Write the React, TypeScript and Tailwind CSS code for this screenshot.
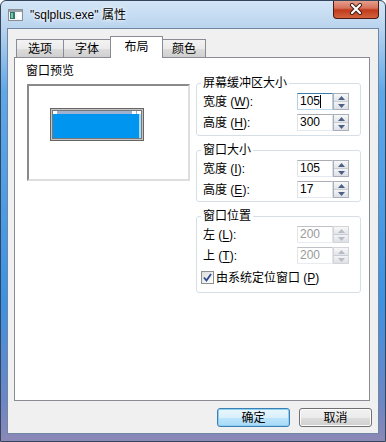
import React from "react";

const Mn = ({ k }: { k: string }) => (
  <span>
    (<span className="underline underline-offset-[2px]">{k}</span>)
  </span>
);

function Spin({ disabled }: { disabled?: boolean }) {
  const c = disabled ? "#b8bcc4" : "#4d6185";
  const b = disabled ? "border-[#d2d4d8]" : "border-[#a9b0ba]";
  return (
    <div className={`w-[16px] h-[17px] flex flex-col border ${b} bg-white`}>
      <div className="flex-1 flex items-center justify-center bg-[linear-gradient(180deg,#f8f8f8,#e2e4e8)] border-b border-[#c9ced6]">
        <svg width="7" height="4" viewBox="0 0 7 4">
          <path d="M0 4 L3.5 0 L7 4 Z" fill={c} />
        </svg>
      </div>
      <div className="flex-1 flex items-center justify-center bg-[linear-gradient(180deg,#f2f3f5,#dde0e5)]">
        <svg width="7" height="4" viewBox="0 0 7 4">
          <path d="M0 0 L3.5 4 L7 0 Z" fill={c} />
        </svg>
      </div>
    </div>
  );
}

function Field({ value, focused, disabled }: { value: string; focused?: boolean; disabled?: boolean }) {
  let cls = "border-t-[#abadb3] border-l-[#e2e3ea] border-r-[#dbdfe6] border-b-[#e3e9ef] text-black";
  if (focused) cls = "border-t-[#3d7bad] border-l-[#b5cfe7] border-r-[#b5cfe7] border-b-[#b7d9ed] text-black";
  if (disabled) cls = "border-t-[#bfc1c6] border-l-[#e4e5ea] border-r-[#e4e5ea] border-b-[#e8ecf0] text-[#9a9a9a]";
  return (
    <div className={`w-[36px] h-[17px] border bg-white flex items-center pl-[2px] text-[12px] leading-[15px] ${cls}`}>
      <span>{value}</span>
      {focused && <span className="w-px h-[13px] bg-black" />}
    </div>
  );
}

function Row({ label, k, value, focused, disabled }: { label: string; k: string; value: string; focused?: boolean; disabled?: boolean }) {
  return (
    <div className="flex items-center h-[17px] pl-[2px]">
      <div className="w-[94px] text-[12px] leading-[14px]">
        {label} <Mn k={k} />:
      </div>
      <Field value={value} focused={focused} disabled={disabled} />
      <Spin disabled={disabled} />
    </div>
  );
}

function Group({ title, children, className }: { title: string; children: React.ReactNode; className?: string }) {
  return (
    <fieldset className={`border border-[#d5dfe5] rounded-[3px] pl-[4px] pr-[10px] ${className ?? ""}`}>
      <legend className="px-[2px] text-[12px] leading-[14px]">{title}</legend>
      <div className="flex flex-col gap-[4px] mt-[3px]">{children}</div>
    </fieldset>
  );
}

function Tab({ label, selected, className }: { label: string; selected?: boolean; className?: string }) {
  if (selected)
    return (
      <div className={`relative z-10 h-[22px] mb-[-1px] bg-white border border-b-0 border-[#898c95] flex items-start justify-center pt-[3px] text-[12px] leading-[14px] ${className ?? ""}`}>
        {label}
      </div>
    );
  return (
    <div className={`h-[18px] border border-b-0 border-[#898c95] bg-[linear-gradient(180deg,#f3f3f3,#ebebeb_50%,#dddddd_51%,#cfcfcf)] flex items-center justify-center text-[12px] leading-[14px] ${className ?? ""}`}>
      {label}
    </div>
  );
}

export default function App() {
  return (
    <div className="w-[386px] h-[442px] flex flex-col rounded-t-[6px] border border-[#34465c] overflow-hidden bg-[linear-gradient(180deg,#d3e5f6,#b8d3ee_28px,#5fa8e8_90px,#3d92e2_300px,#6d86c4_400px,#8c88b6)] font-['Liberation_Sans','Noto_Sans_CJK_SC',sans-serif] text-black">
      {/* title bar */}
      <div className="h-[27px] flex items-start">
        <div className="pl-[7px] pt-[8px]">
          <svg width="15" height="12" viewBox="0 0 15 12">
            <rect x="0.5" y="0.5" width="14" height="11" fill="#f4f4f4" stroke="#8a8f96" />
            <rect x="1" y="1" width="13" height="2" fill="#9aa3ad" />
            <rect x="2" y="3" width="5" height="7" fill="#2f7a68" />
            <rect x="3" y="4" width="2" height="5" fill="#7fc0b0" />
            <rect x="9" y="3" width="4" height="7" fill="#ffffff" />
          </svg>
        </div>
        <div className="ml-[7px] pt-[7px] text-[12px] leading-[15px] text-black [text-shadow:0_0_6px_#ffffff,0_0_3px_#ffffff]">
          "sqlplus.exe" 属性
        </div>
        <div className="ml-auto mr-[6px] mt-[-1px] w-[46px] h-[19px] rounded-b-[4px] border border-t-0 border-[#4a1a12] bg-[linear-gradient(180deg,#e8a493,#d6735b_45%,#c13a1c_55%,#d2643c)] flex items-center justify-center">
          <svg width="14" height="12" viewBox="0 0 14 12">
            <path d="M3 2 L11 10 M11 2 L3 10" stroke="#3c1a14" strokeWidth="4" strokeLinecap="round" />
            <path d="M3 2 L11 10 M11 2 L3 10" stroke="#ffffff" strokeWidth="2.2" strokeLinecap="round" />
          </svg>
        </div>
      </div>

      {/* client area */}
      <div className="mx-[6px] mb-[7px] flex-1 border border-[#6f87a3] bg-[#f0f0f0] flex flex-col pt-[7px]">
        <div className="pl-[6px] pr-[8px]">
          <div className="flex items-end ml-[2px] h-[21px]">
            <Tab label="选项" className="w-[48px]" />
            <Tab label="字体" className="w-[48px] -ml-px" />
            <Tab label="布局" selected className="w-[53px] -ml-px" />
            <Tab label="颜色" className="w-[44px] -ml-px" />
          </div>
          <div className="h-[344px] border border-[#898c95] bg-white flex">
            {/* preview */}
            <div className="w-[164px] ml-[11px] pt-[6px] flex flex-col">
              <div className="text-[12px] leading-[14px]">窗口预览</div>
              <div className="ml-px mt-[6px] w-[163px] h-[97px] border-2 border-t-[#8a8a8a] border-l-[#8a8a8a] border-r-[#dedede] border-b-[#dedede] bg-white pt-[22px] pl-[21px]">
                <div className="w-[94px] h-[33px] border border-[#666666] bg-[#c4c4c4] p-px">
                  <div className="w-full h-full border border-[#777777] flex flex-col">
                    <div className="h-[3px] bg-[#9fb1d1] flex justify-between">
                      <div className="w-[4px] bg-white" />
                      <div className="flex gap-px">
                        <div className="w-[4px] bg-white" />
                        <div className="w-[4px] bg-white" />
                      </div>
                    </div>
                    <div className="flex-1 bg-[#0096f0] flex justify-end">
                      <div className="w-[2px] bg-[#a8dcf8]" />
                    </div>
                  </div>
                </div>
              </div>
            </div>

            {/* settings */}
            <div className="w-[165px] ml-[6px] pt-[18px] flex flex-col">
              <Group title="屏幕缓冲区大小" className="pb-[4px]">
                <Row label="宽度" k="W" value="105" focused />
                <Row label="高度" k="H" value="300" />
              </Group>
              <Group title="窗口大小" className="mt-[7px] pb-[3px]">
                <Row label="宽度" k="I" value="105" />
                <Row label="高度" k="E" value="17" />
              </Group>
              <Group title="窗口位置" className="mt-[7px] pb-[6px]">
                <Row label="左" k="L" value="200" disabled />
                <Row label="上" k="T" value="200" disabled />
                <div className="flex items-center h-[17px] mt-[1px]">
                  <div className="w-[13px] h-[13px] border border-[#8e8f8f] bg-[linear-gradient(135deg,#dcdcdc,#ffffff)] flex items-center justify-center">
                    <svg width="9" height="9" viewBox="0 0 9 9">
                      <path d="M1 4.5 L3.5 7.5 L8 1" stroke="#2c4a8c" strokeWidth="1.8" fill="none" />
                    </svg>
                  </div>
                  <div className="ml-[2px] text-[12px] leading-[14px]">
                    由系统定位窗口 <Mn k="P" />
                  </div>
                </div>
              </Group>
            </div>
          </div>
        </div>

        {/* buttons */}
        <div className="mt-[7px] flex justify-end gap-[9px] pr-[6px]">
          <button className="w-[73px] h-[19px] rounded-[3px] border border-[#3c7fb1] bg-[linear-gradient(180deg,#eaf6fd,#d9f0fc_50%,#bee6fd_51%,#a7d9f5)] shadow-[inset_0_0_0_1px_#8ed0f5] text-[12px] leading-[14px] flex items-center justify-center">
            确定
          </button>
          <button className="w-[73px] h-[19px] rounded-[3px] border border-[#707070] bg-[linear-gradient(180deg,#f2f2f2,#ebebeb_50%,#dddddd_51%,#cfcfcf)] shadow-[inset_0_0_0_1px_#fcfcfc] text-[12px] leading-[14px] flex items-center justify-center">
            取消
          </button>
        </div>
      </div>
    </div>
  );
}
